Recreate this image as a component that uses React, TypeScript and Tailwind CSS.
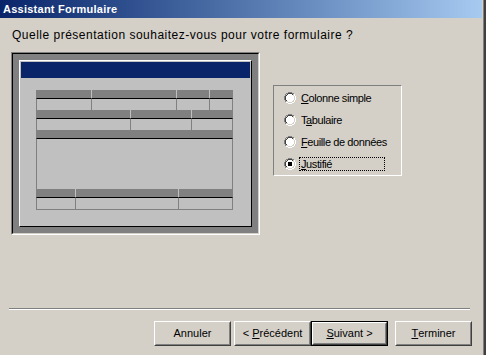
import React from "react";

const ui = "font-['Liberation_Sans',Arial,sans-serif] text-[11px] text-black";

const sections = [
	{ cols: ["w-[55px]", "w-[85px]", "w-[33px]", "w-[24px]"], field: "h-[12px]" },
	{ cols: ["w-[94px]", "w-[61px]", "w-[42px]"], field: "h-[12px]" },
	{ cols: ["w-[197px]"], field: "h-[51px]" },
	{ cols: ["w-[39px]", "w-[103px]", "w-[55px]"], field: "h-[13px] border-b border-b-[#808080]" },
];

const Radio = ({ checked }: { checked?: boolean }) => (
	<svg width="12" height="12" viewBox="0 0 12 12" shapeRendering="crispEdges">
		<circle cx="6" cy="6" r="4.5" fill="#fff" />
		<path d="M2.11 9.89 A5.5 5.5 0 0 1 9.89 2.11" stroke="#808080" fill="none" />
		<path d="M9.89 2.11 A5.5 5.5 0 0 1 2.11 9.89" stroke="#fff" fill="none" />
		<path d="M2.82 9.18 A4.5 4.5 0 0 1 9.18 2.82" stroke="#404040" fill="none" />
		<path d="M9.18 2.82 A4.5 4.5 0 0 1 2.82 9.18" stroke="#d4d0c8" fill="none" />
		{checked && <rect x="4" y="4" width="4" height="4" fill="#000" />}
	</svg>
);

const Option = ({ pre, key_, post, checked }: { pre: string; key_: string; post: string; checked?: boolean }) => (
	<div className="flex items-center h-[22px]">
		<Radio checked={checked} />
		<div
			className={`ml-[3px] w-[86px] h-[14px] px-[1px] flex items-center whitespace-nowrap tracking-[-0.4px] border border-dotted ${
				checked ? "border-black" : "border-transparent"
			}`}
		>
			<span>
				{pre}
				<span className="underline">{key_}</span>
				{post}
			</span>
		</div>
	</div>
);

const Button = ({ children, primary }: { children: React.ReactNode; primary?: boolean }) => (
	<div className={`w-[77px] h-[25px] ${primary ? "border border-black" : ""}`}>
		<div className="h-full border border-t-white border-l-white border-b-[#404040] border-r-[#404040]">
			<div className="h-full flex items-center justify-center whitespace-pre border border-t-[#d4d0c8] border-l-[#d4d0c8] border-b-[#808080] border-r-[#808080]">
				{children}
			</div>
		</div>
	</div>
);

const Preview = () => (
	<div className="w-[249px] h-[183px] border border-t-[#808080] border-l-[#808080] border-b-white border-r-white">
		<div className="h-full p-[6px] bg-[#808080] border border-t-black border-l-black border-b-[#d4d0c8] border-r-[#d4d0c8]">
			<div className="h-full p-[1px] bg-[#c0c0c0] border border-t-white border-l-white border-b-black border-r-black">
				<div className="h-[16px] bg-[#0a246a]" />
				<div className="mt-[12px] ml-[15px] w-[197px] flex flex-col">
					{sections.map((s, si) => (
						<div key={si} className="flex">
							{s.cols.map((w, i) => (
								<div key={i} className={`${w} flex flex-col`}>
									<div className={`h-[8px] bg-[#808080] ${i > 0 ? "border-l border-l-[#c0c0c0]" : ""}`} />
									<div
										className={`${s.field} bg-[#c0c0c0] border-t border-t-black border-l border-l-[#808080] ${
											i === s.cols.length - 1 ? "border-r border-r-[#808080]" : ""
										}`}
									/>
								</div>
							))}
						</div>
					))}
				</div>
			</div>
		</div>
	</div>
);

export default function App() {
	return (
		<div className={`${ui} w-[486px] h-[355px] bg-[#d4d0c8] flex overflow-hidden`}>
			<div className="w-[482px] flex flex-col">
				<div className="h-[18px] flex items-center pl-[3px] bg-linear-to-r from-[#0a246a] to-[#a6caf0]">
					<span className="text-white font-bold tracking-[0.25px]">Assistant Formulaire</span>
				</div>

				<p className="mt-[10px] pl-[12px] h-[14px] leading-[14px] text-[12px] tracking-[0.5px] whitespace-nowrap">
					Quelle présentation souhaitez-vous pour votre formulaire ?
				</p>

				<div className="mt-[10px] pl-[11px] flex items-start">
					<Preview />
					<div className="mt-[33px] ml-[13px] w-[129px] h-[91px] pt-[1px] pl-[10px] border border-t-[#808080] border-l-[#808080] border-b-white border-r-white">
						<Option pre="" key_="C" post="olonne simple" />
						<Option pre="T" key_="a" post="bulaire" />
						<Option pre="" key_="F" post="euille de données" />
						<Option pre="" key_="J" post="ustifié" checked />
					</div>
				</div>

				<div className="mt-[73px] ml-[9px] w-[461px] h-[2px] border-t border-t-[#808080] border-b border-b-white" />

				<div className="mt-[11px] ml-[154px] flex">
					<Button>Annuler</Button>
					<div className="ml-[3px] flex">
						<Button>
							{"< "}
							<span className="underline">P</span>
							{"récédent"}
						</Button>
						<Button primary>
							<span className="underline">S</span>
							{"uivant >"}
						</Button>
					</div>
					<div className="ml-[7px]">
						<Button>
							<span className="underline">T</span>
							{"erminer"}
						</Button>
					</div>
				</div>
			</div>
			<div className="w-[4px] flex">
				<div className="w-[1px] bg-[#d4d0c8]" />
				<div className="w-[1px] bg-[#808080]" />
				<div className="w-[2px] bg-[#404040]" />
			</div>
		</div>
	);
}
